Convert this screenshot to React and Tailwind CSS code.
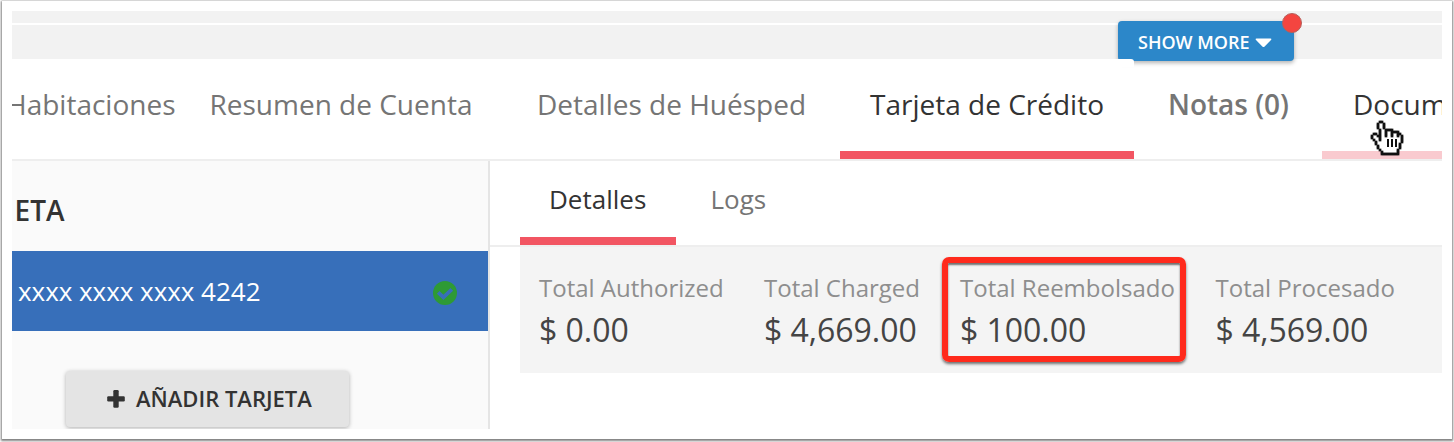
const tabs = [
  { label: 'Habitaciones', className: 'w-[174px] -ml-[6px] text-[#757575] border-transparent' },
  { label: 'Resumen de Cuenta', className: 'w-[330px] pl-[29.5px] text-[#757575] border-transparent' },
  { label: 'Detalles de Huésped', className: 'w-[330px] pl-[27px] text-[#757575] border-transparent' },
  { label: 'Tarjeta de Crédito', className: 'w-[294px] pl-[30px] text-[#333] border-[#f25562]' },
  { label: 'Notas (0)', className: 'w-[188px] pl-[34px] font-semibold text-[#757575] border-transparent' },
  { label: 'Documentos', className: 'w-[260px] pl-[31px] text-[#333] border-[#f9cacf]' },
];

const totals = [
  { label: 'Total Authorized', value: '$ 0.00', className: 'w-[225px]' },
  { label: 'Total Charged', value: '$ 4,669.00', className: 'w-[196px]' },
  { label: 'Total Reembolsado', value: '$ 100.00', className: 'w-[255.5px]', highlight: true },
  { label: 'Total Procesado', value: '$ 4,569.00', className: 'w-[200px]' },
];

// # = outline, o = fill
const handRows = [
  '....##..........',
  '...#oo#.........',
  '...#oo#.........',
  '...#oo#.........',
  '....#oo####.....',
  '....#oo#oo####..',
  '.##.#oo#oo#oo##.',
  '#oo##oo#oo#oo#o#',
  '#ooo#oooooooooo#',
  '.#oo#ooo#o#o#oo#',
  '..#ooooo#o#o#oo#',
  '..#ooooo#o#o#o#.',
  '...#oooo#o#o#o#.',
  '...#oooooooooo#.',
  '....#oooooooo#..',
  '.....#ooooooo#..',
  '.....#########..',
];

function HandCursor() {
  const cells = handRows.flatMap((row, y) => row.split('').map((cell, x) => ({ cell, x, y })));

  return (
    <svg className="absolute left-[1371px] top-[121px] overflow-visible" width="32" height="34" viewBox="0 0 16 17">
      {cells.filter((c) => c.cell === 'o').map((c) => (
        <rect key={`${c.x}-${c.y}`} x={c.x - 0.1} y={c.y - 0.1} width="1.2" height="1.2" fill="#fff" />
      ))}
      {cells.filter((c) => c.cell === '#').map((c) => {
        // finger creases are thinner than the outline
        const crease = c.y >= 9 && c.y <= 12 && (c.x === 8 || c.x === 10 || c.x === 12);
        const grow = crease ? 0 : 0.18;
        return (
          <rect
            key={`${c.x}-${c.y}`}
            x={c.x - grow}
            y={c.y - grow}
            width={1 + grow * 2}
            height={1 + grow * 2}
            fill="#111"
          />
        );
      })}
    </svg>
  );
}

function CaretIcon() {
  return (
    <svg className="mt-[1px] shrink-0" width="17" height="10" viewBox="0 0 17 10" fill="currentColor">
      <path d="M1.5 0.5h14q0.9 0 0.9 0.6t-0.4 0.9l-6.6 6.7q-0.9 0.8-1.8 0l-6.6-6.7q-0.4-0.4-0.4-0.9t0.9-0.6z" />
    </svg>
  );
}

function PlusIcon() {
  return (
    <svg className="mr-[12px] shrink-0" width="18" height="18" viewBox="0 0 18 18" fill="currentColor">
      <rect x="0.2" y="6.2" width="17.6" height="5.2" rx="1.2" />
      <rect x="6.3" y="0.1" width="5.4" height="17.6" rx="1.2" />
    </svg>
  );
}

function CheckIcon() {
  return (
    <svg className="mt-1 shrink-0" width="24" height="24" viewBox="0 0 24 24">
      <circle cx="12" cy="12" r="12" fill="#2e9a35" />
      <path d="M5.2 11.4l5.2 5 8.4-8" fill="none" stroke="#376fba" strokeWidth="3.8" strokeLinejoin="miter" />
    </svg>
  );
}

function ShowMoreButton() {
  return (
    <div className="absolute left-[1118px] top-[21px]">
      <button className="flex h-10 w-44 items-center rounded bg-[#2c87c9] pl-5 pt-[3px] text-[18px] font-semibold text-white shadow-[0_2px_4px_rgba(0,0,0,0.3)]">
        <span className="w-[117px] whitespace-nowrap text-left">SHOW MORE</span>
        <CaretIcon />
      </button>
      <span className="absolute -left-1 top-[38px] h-2 w-5 rounded-tr-[3px] bg-white" />
      <span className="absolute -top-[8px] left-[164px] h-5 w-5 rounded-full border border-[#b5605c] bg-[#f44540]" />
    </div>
  );
}

function Sidebar() {
  return (
    <aside className="w-[478px] shrink-0 border-r-2 border-[#e5e5e5] bg-[#fafafa]">
      <h2 className="h-[90px] overflow-hidden pl-[2.5px] text-[28px] font-semibold leading-[98px] text-[#333]">ETA</h2>
      <div className="flex h-20 items-center justify-between bg-[#376fba] pl-1.5 pr-[31px] text-[26px] text-white">
        <span className="tracking-[-0.03px]">xxxx xxxx xxxx 4242</span>
        <CheckIcon />
      </div>
      <button className="ml-[54px] mt-10 flex h-14 w-[283px] items-center rounded bg-[#e4e4e4] pb-px pl-[41px] text-[22px] font-semibold text-[#333] shadow-[0_1px_4px_rgba(0,0,0,0.3)]">
        <PlusIcon />
        <span className="-ml-px">AÑADIR TARJETA</span>
      </button>
    </aside>
  );
}

function Totals() {
  return (
    <div className="ml-[30px] flex h-[126px] bg-[#f4f4f4] pl-[19px] pt-5">
      {totals.map((t) => (
        <div key={t.label} className={`relative shrink-0 whitespace-nowrap leading-[41px] ${t.className}`}>
          <div className="text-[24px] text-[#8e8e8e]">{t.label}</div>
          <div className="text-[32px] leading-[43px] tracking-[-0.04px] text-[#444]">{t.value}</div>
          {t.highlight && (
            <div className="absolute -left-[18px] -top-[10px] h-[105px] w-[244px] rounded-[7px] border-[6px] border-[#ff2a1c] shadow-[0_2px_3px_rgba(0,0,0,0.55),inset_0_2px_2px_rgba(0,0,0,0.55)]" />
          )}
        </div>
      ))}
    </div>
  );
}

export default function App() {
  return (
    <div className="relative h-[442px] w-[1454px] overflow-hidden bg-white pl-[2px] pt-px font-['Open_Sans',sans-serif]">
      <div className="h-[438px] w-[1450px] bg-white px-[10px] pt-[10px] shadow-[0_1px_2px_1px_rgba(0,0,0,0.5)]">
        <div className="h-[418px] w-[1430px] overflow-hidden">
          <div className="h-3 bg-[#f2f2f2]" />
          <div className="mt-0.5 h-[34px] bg-[#f2f2f2]" />
          <nav className="flex h-[102px] border-b-2 border-[#eee]">
            {tabs.map((tab) => (
              <a
                key={tab.label}
                className={`h-[100px] shrink-0 whitespace-nowrap border-b-8 text-[28px] leading-[91px] ${tab.className}`}
              >
                {tab.label}
              </a>
            ))}
          </nav>
          <div className="flex h-[268px]">
            <Sidebar />
            <main className="min-w-0 flex-1">
              <div className="flex h-[86px] border-b-2 border-[#eee] pl-[30px] text-[26px] leading-[76px]">
                <a className="h-[84px] w-[156px] border-b-8 border-[#f25562] pl-[29px] text-[#333]">Detalles</a>
                <a className="h-[84px] pl-[34.5px] text-[#757575]">Logs</a>
              </div>
              <Totals />
            </main>
          </div>
        </div>
      </div>
      <ShowMoreButton />
      <HandCursor />
    </div>
  );
}
